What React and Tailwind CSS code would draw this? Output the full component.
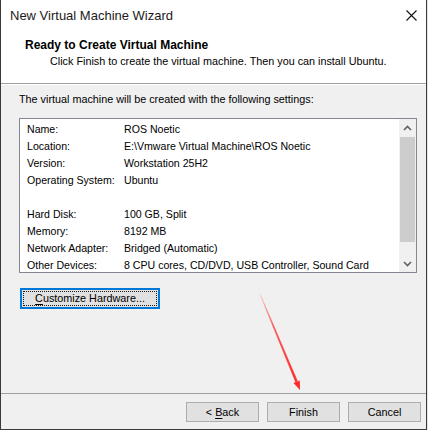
import React from "react";

const settings = [
  ["Name:", "ROS Noetic"],
  ["Location:", "E:\\Vmware Virtual Machine\\ROS Noetic"],
  ["Version:", "Workstation 25H2"],
  ["Operating System:", "Ubuntu"],
  null,
  ["Hard Disk:", "100 GB, Split"],
  ["Memory:", "8192 MB"],
  ["Network Adapter:", "Bridged (Automatic)"],
  ["Other Devices:", "8 CPU cores, CD/DVD, USB Controller, Sound Card"],
];

function Chevron({ up }) {
  return (
    <svg width="9" height="6" viewBox="0 0 9 6" className="block">
      <path
        d={up ? "M1 5 L4.5 1.5 L8 5" : "M1 1 L4.5 4.5 L8 1"}
        fill="none"
        stroke="#606060"
        strokeWidth="1.6"
      />
    </svg>
  );
}

function WizardButton({ children }) {
  return (
    <button className="w-[73px] h-[20px] bg-[#e1e1e1] border border-[#adadad] text-[10.8px] leading-none text-black flex items-center justify-center">
      {children}
    </button>
  );
}

export default function App() {
  return (
    <div
      className="w-[428px] h-[430px] bg-[#e6e6e6] text-black"
      style={{ fontFamily: '"Liberation Sans", Arial, sans-serif' }}
    >
      <div className="relative w-[427px] h-[430px] bg-[#f0f0f0] border-l border-r border-b border-[#3a3a3a] flex flex-col">
        {/* title bar */}
        <div className="h-[31px] bg-white flex items-center justify-between pl-[9px] pr-[9px]">
          <span className="text-[13px] text-[#1a1a1a]">New Virtual Machine Wizard</span>
          <svg width="11" height="11" viewBox="0 0 11 11">
            <path d="M0.5 0.5 L10.5 10.5 M10.5 0.5 L0.5 10.5" stroke="#111" strokeWidth="1.1" />
          </svg>
        </div>

        {/* header */}
        <div className="h-[53px] bg-white border-b border-[#a0a0a0] pt-[6px] pl-[24px]">
          <div className="text-[12px] font-bold leading-[16px]">Ready to Create Virtual Machine</div>
          <div className="text-[10.8px] leading-[16px] pl-[25px]">
            Click Finish to create the virtual machine. Then you can install Ubuntu.
          </div>
        </div>

        {/* body */}
        <div className="flex-1 border-t border-white pt-[6px] pl-[18px] pr-[9px]">
          <div className="text-[10.8px] leading-[16px]">
            The virtual machine will be created with the following settings:
          </div>

          <div className="mt-[11px] h-[155px] bg-white border border-[#828790] flex overflow-hidden">
            <div className="flex-1 pt-[2px] pl-[7px] text-[10.6px]">
              {settings.map((row, i) =>
                row ? (
                  <div key={i} className="flex h-[17px] items-center whitespace-nowrap">
                    <span className="w-[97px]">{row[0]}</span>
                    <span>{row[1]}</span>
                  </div>
                ) : (
                  <div key={i} className="h-[17px]" />
                )
              )}
            </div>
            <div className="w-[17px] bg-[#f0f0f0] flex flex-col items-center">
              <div className="h-[17px] flex items-center justify-center">
                <Chevron up />
              </div>
              <div className="mt-[1px] h-[105px] w-[15px] bg-[#cdcdcd]" />
              <div className="flex-1" />
              <div className="h-[17px] flex items-center justify-center">
                <Chevron />
              </div>
            </div>
          </div>

          <button className="mt-[15px] ml-[1px] w-[140px] h-[21px] bg-[#e1e1e1] border-2 border-[#0078d7] p-px">
            <span className="flex h-full items-center justify-center border border-dotted border-[#1a1a1a] text-[10.8px] leading-none">
              <span className="underline underline-offset-2">C</span>ustomize Hardware...
            </span>
          </button>
        </div>

        {/* footer */}
        <div className="h-[36px] border-t border-[#a0a0a0] flex items-start justify-end gap-[8px] pt-[8px] pr-[5px]">
          <WizardButton>
            &lt; <span className="underline underline-offset-2 ml-[3px]">B</span>ack
          </WizardButton>
          <WizardButton>Finish</WizardButton>
          <WizardButton>Cancel</WizardButton>
        </div>

        {/* red annotation arrow */}
        <svg
          className="absolute left-[-1px] top-0 pointer-events-none"
          width="428"
          height="430"
          viewBox="0 0 428 430"
        >
          <defs>
            <linearGradient id="arrowFade" x1="260" y1="294" x2="298" y2="386" gradientUnits="userSpaceOnUse">
              <stop offset="0" stopColor="#ff3b3b" stopOpacity="0.15" />
              <stop offset="0.35" stopColor="#ff3b3b" stopOpacity="0.8" />
              <stop offset="1" stopColor="#ff2a2a" stopOpacity="1" />
            </linearGradient>
          </defs>
          <polygon
            points="260.5,293.8 297.8,381.2 295.4,382.2 259.5,294.2"
            fill="url(#arrowFade)"
          />
          <polygon points="300,390 299.8,380.4 293.4,383" fill="#ff2a2a" />
        </svg>
      </div>
    </div>
  );
}
